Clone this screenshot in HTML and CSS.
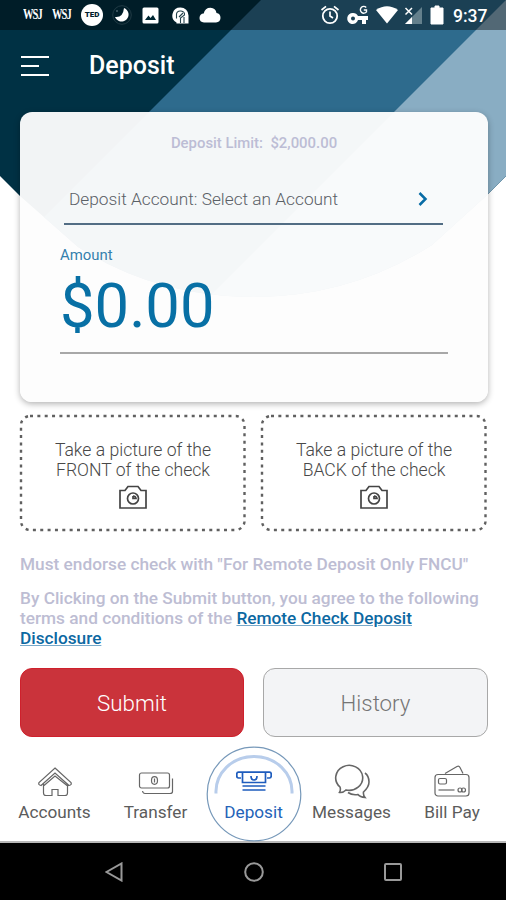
FILE: index.html
```html
<!DOCTYPE html>
<html lang="en">
<head>
<meta charset="utf-8">
<title>Deposit</title>
<link rel="stylesheet" href="styles.css">
</head>
<body>
<div class="screen">
  <svg class="backdrop" width="506" height="300" viewBox="0 0 506 300">
    <defs><clipPath id="shape"><path d="M0 0H506V176L486 196L432 245Q350 297 253 297Q156 297 78 247L20 196L0 176Z"/></clipPath></defs>
    <g clip-path="url(#shape)">
      <rect width="506" height="300" fill="#003144"/>
      <path d="M261 0H506V300H-39Z" fill="#2e6b8d"/>
      <path d="M506 0V300H206Z" fill="#89adc3"/>
    </g>
  </svg>

  <header class="status">
    <span class="wsj first">WSJ</span>
    <span class="wsj">WSJ</span>
    <span class="ted">TED</span>
    <svg class="moon" width="20" height="20" viewBox="0 0 20 20"><circle cx="10" cy="10" r="9.3" fill="none" stroke="#29424d" stroke-width=".8"/><path d="M12 3A7 7 0 1 1 3 12Q11 13 12 3Z" fill="#fff"/><circle cx="5" cy="6" r=".8" fill="#7d929c"/></svg>
    <svg class="photo" width="17" height="17" viewBox="0 0 17 17"><rect x=".5" y=".5" width="16" height="16" rx="1.5" fill="#fff"/><path d="M3 13L6.5 8.5L8.5 11L11 8L14 13Z" fill="#002733"/></svg>
    <svg class="key-app" width="17" height="17" viewBox="0 0 17 17"><path d="M8.5 .5A8 8 0 0 1 16.5 8.5V16.5H4.5V15.5A8 8 0 0 1 8.5 .5Z" fill="#fff"/><path d="M4.5 11.5V7Q5 3.5 9 4T12.5 8L8.5 11V16M7 10L11 6M12 10V16" fill="none" stroke="#24424c" stroke-width="1.1"/></svg>
    <svg class="cloud" width="22" height="16" viewBox="0 0 22 16"><path d="M5 15.5Q.5 15 .5 11Q.8 6.7 4.7 6.5Q6 .7 11.5 .7Q16.7 1 17.5 6Q21.5 6.5 21.5 11Q21.3 15.2 17 15.5Z" fill="#fff"/></svg>
    <svg class="system" width="126" height="22" viewBox="0 0 126 22">
      <g fill="none" stroke="#fff">
        <circle cx="10" cy="12" r="7.2" stroke-width="1.8"/><path d="M10 7.5V12L13 14M1.5 6L6 2.3M14 2.3L18.5 6" stroke-width="1.7"/>
      </g>
      <path d="M33 9A5.500 5.500 0 0 1 38 12H48V16H46V20H42V16H38A5.500 5.500 0 1 1 33 9ZM33 12.500A2 2 0 1 0 33 16.500A2 2 0 0 0 33 12.500Z" fill="#fff" fill-rule="evenodd"/>
      <path d="M46.2 3.4A3.4 3.4 0 1 0 46.5 7.8V6H43.8" fill="none" stroke="#fff" stroke-width="1.4"/>
      <path d="M56 6Q67 -1.5 78 6L67 19.5Z" fill="#fff"/>
      <path d="M102 3V20H85Z" fill="#64808c"/><path d="M92 13V20H85Z" fill="#fff"/><path d="M85.5 4L92 10.5M92 4L85.5 10.5" stroke="#fff" stroke-width="1.5"/>
      <path d="M115 2H119V4H123V20H111V4H115Z" fill="#fff" stroke="#fff" stroke-linejoin="round"/>
    </svg>
    <span class="time">9:37</span>
  </header>

  <div class="titlebar">
    <svg width="28" height="22" viewBox="0 0 28 22"><path d="M0 2H28M0 11H18M0 20H28" stroke="#fff" stroke-width="2.200"/></svg>
    <h1>Deposit</h1>
  </div>

  <section class="card">
    <p class="limit">Deposit Limit: &nbsp;$2,000.00</p>
    <div class="account"><span>Deposit Account: Select an Account</span>
      <svg width="10" height="14" viewBox="0 0 10 14"><path d="M1.500 1L7.500 7L1.500 13" fill="none" stroke="#086ca5" stroke-width="2.500"/></svg>
    </div>
    <label class="label">Amount</label>
    <div class="amount">$0.00</div>
  </section>

  <div class="photos">
    <div class="shot">
      <svg class="dots" width="228" height="118" viewBox="0 0 228 118"><rect x="2" y="2" width="223.500" height="114" rx="9"/></svg>
      <span>Take a picture of the<br>FRONT of the check</span>
      <svg class="camera" width="28" height="24" viewBox="0 0 28 24"><path d="M1 5.500H6L9 1.500H19L22 5.500H27V23H1Z"/><circle cx="14" cy="13.500" r="5.500"/><path d="M14 11V13.500H17A3 3 0 0 0 14 11"/></svg>
    </div>
    <div class="shot">
      <svg class="dots" width="228" height="118" viewBox="0 0 228 118"><rect x="2" y="2" width="223.500" height="114" rx="9"/></svg>
      <span>Take a picture of the<br>BACK of the check</span>
      <svg class="camera" width="28" height="24" viewBox="0 0 28 24"><path d="M1 5.500H6L9 1.500H19L22 5.500H27V23H1Z"/><circle cx="14" cy="13.500" r="5.500"/><path d="M14 11V13.500H17A3 3 0 0 0 14 11"/></svg>
    </div>
  </div>

  <div class="legal">
    <p class="endorse">Must endorse check with "For Remote Deposit Only FNCU"</p>
    <p>By Clicking on the Submit button, you agree to the following<br>terms and conditions of the <a>Remote Check Deposit<br>Disclosure</a></p>
  </div>

  <div class="actions">
    <button class="submit">Submit</button>
    <button class="history">History</button>
  </div>

  <nav class="tabs">
    <div class="tab accounts">
      <svg width="34" height="30" viewBox="0 0 34 30"><path d="M17 1L33 15.500Q34 18 31 18.500L17 6L3 18.500Q0 18 1 15.500ZM5.500 16.500V26Q5.500 28.500 8 28.500H14V22.500H20V28.500H27Q29.500 28.500 29.500 26V16.500M6 18.500L17 9L29 18.500"/></svg>
      <span>Accounts</span>
    </div>
    <div class="tab transfer">
      <svg width="36" height="24" viewBox="0 0 36 24"><rect x="1.500" y="2" width="30" height="15" rx="2"/><ellipse cx="16.500" cy="9.500" rx="3" ry="3.800"/><path d="M16.500 7.500V11.500M34.500 7.500V20.500Q34.500 22.500 32 22.500H7Q5 22.500 4.500 20"/></svg>
      <span>Transfer</span>
    </div>
    <div class="tab deposit">
      <svg class="ring" width="96" height="96" viewBox="0 0 96 96"><circle cx="48" cy="48" r="46.800" fill="#fff" stroke="#7698b9" stroke-width="1.200"/><path d="M10 47.500C9 27 26 10.500 48 10.500S87 27 86 47.500" fill="none" stroke="#b8cdeb" stroke-width="3"/></svg>
      <svg class="slot" width="36" height="22" viewBox="0 0 36 22"><path d="M5 7H2.500Q.8 7 .8 5V3Q.8 1.200 2.500 1.200H33.500Q35.200 1.200 35.200 3V5Q35.200 7 33.500 7H31M6.500 2V11.500H29.500V2M15 5Q15 9 18 9T21 5M6.500 15H29.500M6.500 19H29.500"/></svg>
      <span>Deposit</span>
    </div>
    <div class="tab messages">
      <svg width="36" height="36" viewBox="0 0 36 36"><path d="M6 23A13.500 12.500 0 1 1 12 26Q9 29 5.500 28.500Q7 26 6 23ZM31 9Q35 12 35 18Q35 23 29.500 28Q29 31 31 33.500Q26 33 24 30.500Q18 31.500 14 28.500"/></svg>
      <span>Messages</span>
    </div>
    <div class="tab bill">
      <svg width="36" height="32" viewBox="0 0 36 32"><rect x="1" y="9.500" width="34" height="21.500" rx="3"/><path d="M11 8.500L23 1.500Q25 .5 26 2.500L29 8.500"/><rect x="4.500" y="13.500" width="8" height="5.500" rx="1.500"/><path d="M4.500 25H20.500"/><circle cx="26" cy="25" r="2"/><circle cx="29.500" cy="25" r="2"/></svg>
      <span>Bill Pay</span>
    </div>
  </nav>

  <footer class="android">
    <svg width="18" height="20" viewBox="0 0 18 20"><path d="M16.500 1.500V18.500L1.500 10Z"/></svg>
    <svg width="20" height="20" viewBox="0 0 20 20"><circle cx="10" cy="10" r="8.800"/></svg>
    <svg width="18" height="18" viewBox="0 0 18 18"><rect x="1" y="1" width="16" height="16" rx="1"/></svg>
  </footer>
</div>
</body>
</html>
```
FILE: styles.css
```css
* { box-sizing: border-box; }
body { margin: 0; background: #fff; font-family: Roboto, sans-serif; }
p, h1 { margin: 0; }
.screen { position: relative; width: 506px; height: 900px; overflow: hidden; display: flex; flex-direction: column; }
.screen > * { flex: none; }
.backdrop { position: absolute; top: 0; left: 0; z-index: -1; }
.status { height: 30px; background: rgba(0, 0, 0, .4); display: flex; align-items: center; color: #fff; padding-left: 23px; }
.wsj { width: 20px; margin-right: 9px; font: 700 14px "Liberation Serif", serif; letter-spacing: -1.2px; transform: scaleX(.75); transform-origin: left; }
.ted { width: 22px; height: 22px; border-radius: 50%; background: #fff; color: #00202c; font-size: 8px; font-weight: 900; text-align: center; line-height: 22px; }
.moon { margin-left: 9px; }
.photo { margin-left: 10px; }
.key-app { margin-left: 13px; }
.cloud { margin-left: 10px; }
.system { margin-left: 99px; }
.time { margin-left: 7px; font-size: 17.5px; font-weight: 500; line-height: 30px; padding-top: 1px; }
.titlebar { height: 82px; padding: 0 0 11px 21px; display: flex; align-items: center; gap: 40px; color: #fff; }
.titlebar h1 { font-size: 25px; font-weight: 500; line-height: 30px; padding-top: 1px; }
.card { width: 468px; height: 290px; margin-left: 20px; padding: 21px 40px 0; border-radius: 12px; background: rgba(253, 253, 253, .955); box-shadow: 0 2px 6px rgba(0, 0, 0, .3); }
.limit { text-align: center; font-size: 14.9px; font-weight: 500; line-height: 20px; color: #bcbdd5; }
.account { width: 379px; height: 54px; margin: 18px 0 0 4px; padding: 3px 15px 0 5px; border-bottom: 2px solid #526d84; display: flex; align-items: center; justify-content: space-between; color: #5a6066; font-size: 17.3px; font-weight: 300; }
.label { display: block; margin-top: 20px; font-size: 14.9px; line-height: 20px; color: #3480ad; }
.amount { height: 89px; border-bottom: 2px solid #a8a8a8; color: #0870a5; font-size: 61.5px; line-height: 82px; font-weight: 400; }
.photos { display: flex; gap: 13px; margin: 12px 0 0 19px; }
.shot { position: relative; width: 228px; height: 118px; padding-top: 26px; text-align: center; font-size: 17.6px; line-height: 20px; font-weight: 300; color: #484848; }
.dots { position: absolute; left: 0; top: 0; fill: none; stroke: #606060; stroke-width: 2.4; stroke-dasharray: 3 4.35; }
.camera { display: block; margin: 5px auto 0; fill: none; stroke: #444; stroke-width: 1.7; }
.legal { padding: 22px 0 0 20px; height: 134px; color: #bdbdd3; font-size: 17.25px; line-height: 20px; font-weight: 500; white-space: nowrap; }
.endorse { margin-bottom: 14px; }
.legal a { color: #0c68a2; text-decoration: underline; text-decoration-color: #78a9ca; }
.actions { display: flex; gap: 19px; padding-left: 20px; height: 71px; align-items: flex-end; }
.actions button { width: 224px; height: 69px; border-radius: 12px; padding: 1px 0 0; font-family: Roboto, sans-serif; font-size: 22.3px; font-weight: 300; }
.actions .submit { background: #ca333b; border: 1px solid #cf202c; color: #fff; }
.actions .history { width: 225px; background: #f3f4f6; border: 1px solid #a8a8a8; color: #757575; }
.tabs { height: 106px; display: flex; border-bottom: 2px solid #b8b8b8; color: #5c5c5c; }
.tab { position: relative; display: flex; flex-direction: column; align-items: center; justify-content: flex-end; width: 100px; padding-bottom: 19px; font-size: 17.2px; line-height: 20px; white-space: nowrap; }
.tab svg { fill: none; stroke: #666; stroke-width: 1.2; }
.accounts { width: 109px; }
.accounts > svg { margin-bottom: 5px; }
.transfer { width: 93px; }
.transfer > svg { margin-bottom: 7px; }
.deposit { width: 103px; color: #2463b8; }
.deposit .ring { position: absolute; left: 4px; top: 9px; }
.deposit .slot { position: relative; stroke: #1e5cbd; stroke-width: 1.7; margin-bottom: 9px; }
.deposit span { position: relative; }
.messages { width: 93px; }
.messages > svg { margin-bottom: 2px; stroke-width: 1.6; }
.bill { width: 108px; }
.bill > svg { margin-bottom: 5px; }
.android { height: 57px; background: #000; display: flex; align-items: center; padding-left: 105px; }
.android svg { fill: none; stroke: #999; stroke-width: 2; }
.android svg:nth-child(2) { margin-left: 121px; }
.android svg:nth-child(3) { margin-left: 120px; }
```
